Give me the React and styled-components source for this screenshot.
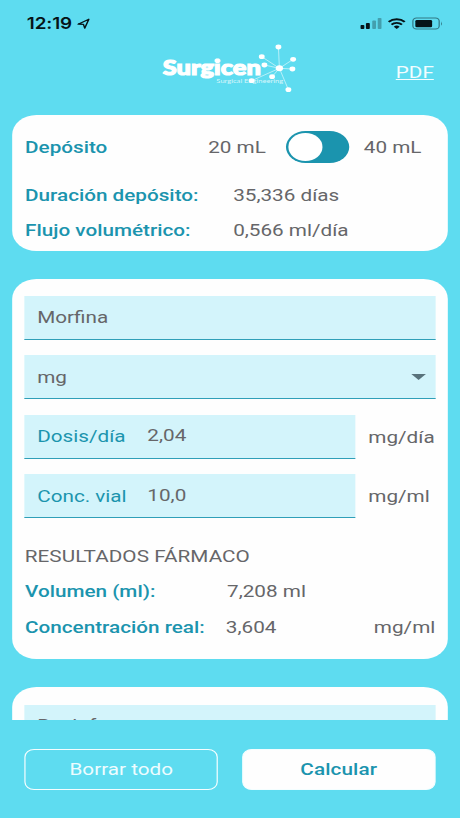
import React, { useState } from 'react';
import styled, { createGlobalStyle } from 'styled-components';

const GlobalStyle = createGlobalStyle`
    * {
        box-sizing: border-box;
    }
    body {
        margin: 0;
        overflow: hidden;
        background-color: #5edcf0;
    }
`;

// the layout is 378 wide and stretched to fill the 460 wide viewport
const Screen = styled.div`
    display: flex;
    flex-direction: column;
    width: 378px;
    height: 818px;
    overflow: hidden;
    transform: scaleX(1.2169);
    transform-origin: 0 0;
    background-color: #5edcf0;
    color: #666669;
    font-family: Roboto, 'Liberation Sans', sans-serif;
    font-size: 17px;
    line-height: 20px;
`;

const StatusBar = styled.div`
    display: flex;
    align-items: center;
    height: 40px;
    padding: 7px 14px 0 22px;
    color: #061418;
`;

const Clock = styled.span`
    font-family: Inter, 'Liberation Sans', sans-serif;
    font-size: 15.5px;
    font-weight: 600;
    letter-spacing: -0.1px;
`;

const LocationIcon = styled.svg`
    margin-left: 4px;
`;

const StatusIcons = styled.svg`
    margin-left: auto;
`;

const Header = styled.header`
    display: grid;
    grid-template-columns: 1fr 115px 1fr;
    height: 74.5px;
    padding: 0 21.5px 0 21px;
`;

const Logo = styled.svg`
    grid-column: 2;
    width: 115px;
    height: 56px;
    fill: #fff;
`;

const PdfLink = styled.a`
    justify-self: end;
    margin-top: 22px;
    color: #f2fdff;
    text-decoration: underline;
    text-underline-offset: 1px;
    text-decoration-thickness: 1px;
`;

const Content = styled.main`
    flex: 1;
    display: flex;
    flex-direction: column;
    gap: 28.5px;
    padding: 0 10.2px;
    overflow: hidden;
`;

const Card = styled.section`
    flex-shrink: 0;
    padding: ${(props) => props.top} 10.1px ${(props) => props.bottom};
    border-radius: 20px;
    background-color: #fefefe;
`;

const DepositRow = styled.div`
    display: flex;
    align-items: center;
    height: 32px;
    margin: 0 0 14.5px 0.3px;
`;

const Label = styled.span`
    width: ${(props) => props.w || 'auto'};
    color: #1b94ae;
    font-weight: ${(props) => (props.light ? 400 : 500)};
    white-space: nowrap;
`;

const Value = styled.span`
    padding-bottom: ${(props) => props.lift || 0};
    white-space: nowrap;
`;

const Toggle = styled.button`
    width: 51.5px;
    height: 32px;
    margin: 0 12px 0 17px;
    padding: 2px;
    border: none;
    border-radius: 16px;
    background-color: #1b94ae;
    cursor: pointer;
`;

const Knob = styled.span`
    display: block;
    width: 28px;
    height: 28px;
    margin-left: ${(props) => (props.on ? '19.5px' : 0)};
    border-radius: 50%;
    background-color: #fff;
`;

const DataRow = styled.div`
    display: flex;
    align-items: center;
    height: 35.3px;
    padding-left: 0.3px;
`;

const Fields = styled.div`
    display: flex;
    flex-direction: column;
    gap: 15.5px;
`;

const FieldRow = styled.div`
    display: flex;
    align-items: center;
    gap: 10.2px;
`;

const Field = styled.div`
    display: flex;
    flex-shrink: 0;
    align-items: center;
    width: ${(props) => props.w || '100%'};
    height: 44px;
    padding: 0 8px 0.4px 10.3px;
    border-bottom: 1px solid #2f9fb8;
    background-color: #d3f4fb;
`;

const Arrow = styled.span`
    margin-left: auto;
    border: 6px solid transparent;
    border-top: 6px solid #58727b;
    border-bottom: none;
`;

const Heading = styled.h2`
    margin: 27.6px 0 7.8px;
    font-size: 17px;
    font-weight: 400;
    line-height: 20px;
    letter-spacing: 0.05px;
`;

const Unit = styled.span`
    margin-left: auto;
`;

const Footer = styled.footer`
    display: flex;
    justify-content: space-between;
    height: 98px;
    padding: 28.5px 20.3px 0;
`;

const Button = styled.button`
    width: 158.7px;
    height: 41px;
    border: 1.4px solid #f4feff;
    border-radius: 8px;
    background-color: ${(props) => (props.primary ? '#fefefe' : 'transparent')};
    color: ${(props) => (props.primary ? '#1b94ae' : '#eefcff')};
    font-family: inherit;
    font-size: 17px;
    font-weight: ${(props) => (props.primary ? 500 : 400)};
    letter-spacing: ${(props) => (props.primary ? '0.1px' : '0')};
    cursor: pointer;
`;

const hub = [98.6, 28.3];
const nodes = [
    [97.8, 7],
    [84.1, 16.7],
    [109.9, 19.3],
    [109.3, 29],
    [86.3, 25],
    [92.6, 36.7],
    [75.8, 40.7],
    [106, 49.7],
];

const SurgicenLogo = () => (
    <Logo viewBox="0 0 115 56">
        <text
            x="2.8"
            y="35.4"
            fontFamily="Lato, sans-serif"
            fontSize="21.5"
            fontWeight="900"
            stroke="#fff"
            strokeWidth="1.2"
            textLength="80.6"
            lengthAdjust="spacingAndGlyphs"
        >
            Surgicen
        </text>
        <text
            x="46.8"
            y="43.3"
            fontFamily="Lato, sans-serif"
            fontSize="6.5"
            fillOpacity="0.75"
            textLength="55"
            lengthAdjust="spacingAndGlyphs"
        >
            Surgical Engineering
        </text>
        {nodes.map(([x, y]) => (
            <g key={`${x}-${y}`}>
                <line x1={hub[0]} y1={hub[1]} x2={x} y2={y} stroke="#fff" strokeWidth="0.5" />
                <circle cx={x} cy={y} r="2.4" />
            </g>
        ))}
        <circle cx={hub[0]} cy={hub[1]} r="3" />
    </Logo>
);

export default () => {
    const [large, setLarge] = useState(false);

    return (
        <>
            <GlobalStyle />
            <Screen>
                <StatusBar>
                    <Clock>12:19</Clock>
                    <LocationIcon width="11" height="12" viewBox="0 0 11 12">
                        <path
                            d="M1.2 6.2 L10 1.2 L6.6 10.2 L5.6 6.4 Z"
                            fill="none"
                            stroke="#061418"
                            strokeWidth="1.2"
                            strokeLinejoin="round"
                        />
                    </LocationIcon>
                    <StatusIcons width="68" height="13" viewBox="0 0 68 13">
                        <g fill="#061418">
                            <rect x="0.2" y="8" width="3.2" height="4" rx="0.8" />
                            <rect x="4.7" y="6" width="3.2" height="6" rx="0.8" />
                            <rect x="9.9" y="3.6" width="3.1" height="8.4" rx="0.8" opacity="0.3" />
                            <rect x="14.4" y="1" width="3.1" height="11" rx="0.8" opacity="0.3" />
                            <path d="M30 12 L27.6 9.7 A3.4 3.4 0 0 1 32.4 9.7 Z" />
                            <rect x="45.3" y="3" width="13.8" height="7.2" rx="1.2" />
                            <path d="M66.4 4.2 Q67.8 6.5 66.4 8.8 Z" opacity="0.5" />
                        </g>
                        <g fill="none" stroke="#061418">
                            <path d="M25.7 7.6 A6 6 0 0 1 34.3 7.6" strokeWidth="1.8" />
                            <path d="M23.4 4.9 A9.4 9.4 0 0 1 36.6 4.9" strokeWidth="1.9" />
                            <rect x="43.3" y="1" width="21.6" height="11" rx="3" opacity="0.5" />
                        </g>
                    </StatusIcons>
                </StatusBar>
                <Header>
                    <SurgicenLogo />
                    <PdfLink href="#pdf">PDF</PdfLink>
                </Header>
                <Content>
                    <Card top="16.5px" bottom="2.5px">
                        <DepositRow>
                            <Label w="150.5px">Depósito</Label>
                            <Value>20 mL</Value>
                            <Toggle onClick={() => setLarge(!large)}>
                                <Knob on={large} />
                            </Toggle>
                            <Value>40 mL</Value>
                        </DepositRow>
                        <DataRow>
                            <Label w="171px">Duración depósito:</Label>
                            <Value>35,336 días</Value>
                        </DataRow>
                        <DataRow>
                            <Label w="171px">Flujo volumétrico:</Label>
                            <Value>0,566 ml/día</Value>
                        </DataRow>
                    </Card>
                    <Card top="16.8px" bottom="14.6px">
                        <Fields>
                            <Field>
                                <Value>Morfina</Value>
                            </Field>
                            <Field>
                                <Value>mg</Value>
                                <Arrow />
                            </Field>
                            <FieldRow>
                                <Field w="272.2px">
                                    <Label light w="90.5px">
                                        Dosis/día
                                    </Label>
                                    <Value lift="2px">2,04</Value>
                                </Field>
                                <Value>mg/día</Value>
                            </FieldRow>
                            <FieldRow>
                                <Field w="272.2px">
                                    <Label light w="90.5px">
                                        Conc. vial
                                    </Label>
                                    <Value lift="2px">10,0</Value>
                                </Field>
                                <Value>mg/ml</Value>
                            </FieldRow>
                        </Fields>
                        <Heading>RESULTADOS FÁRMACO</Heading>
                        <DataRow>
                            <Label w="166px">Volumen (ml):</Label>
                            <Value>7,208 ml</Value>
                        </DataRow>
                        <DataRow>
                            <Label w="165px">Concentración real:</Label>
                            <Value>3,604</Value>
                            <Unit>mg/ml</Unit>
                        </DataRow>
                    </Card>
                    <Card top="17.3px" bottom="14px">
                        <Field>
                            <Value lift="1.2px">Baclofeno</Value>
                        </Field>
                    </Card>
                </Content>
                <Footer>
                    <Button>Borrar todo</Button>
                    <Button primary>Calcular</Button>
                </Footer>
            </Screen>
        </>
    );
};
